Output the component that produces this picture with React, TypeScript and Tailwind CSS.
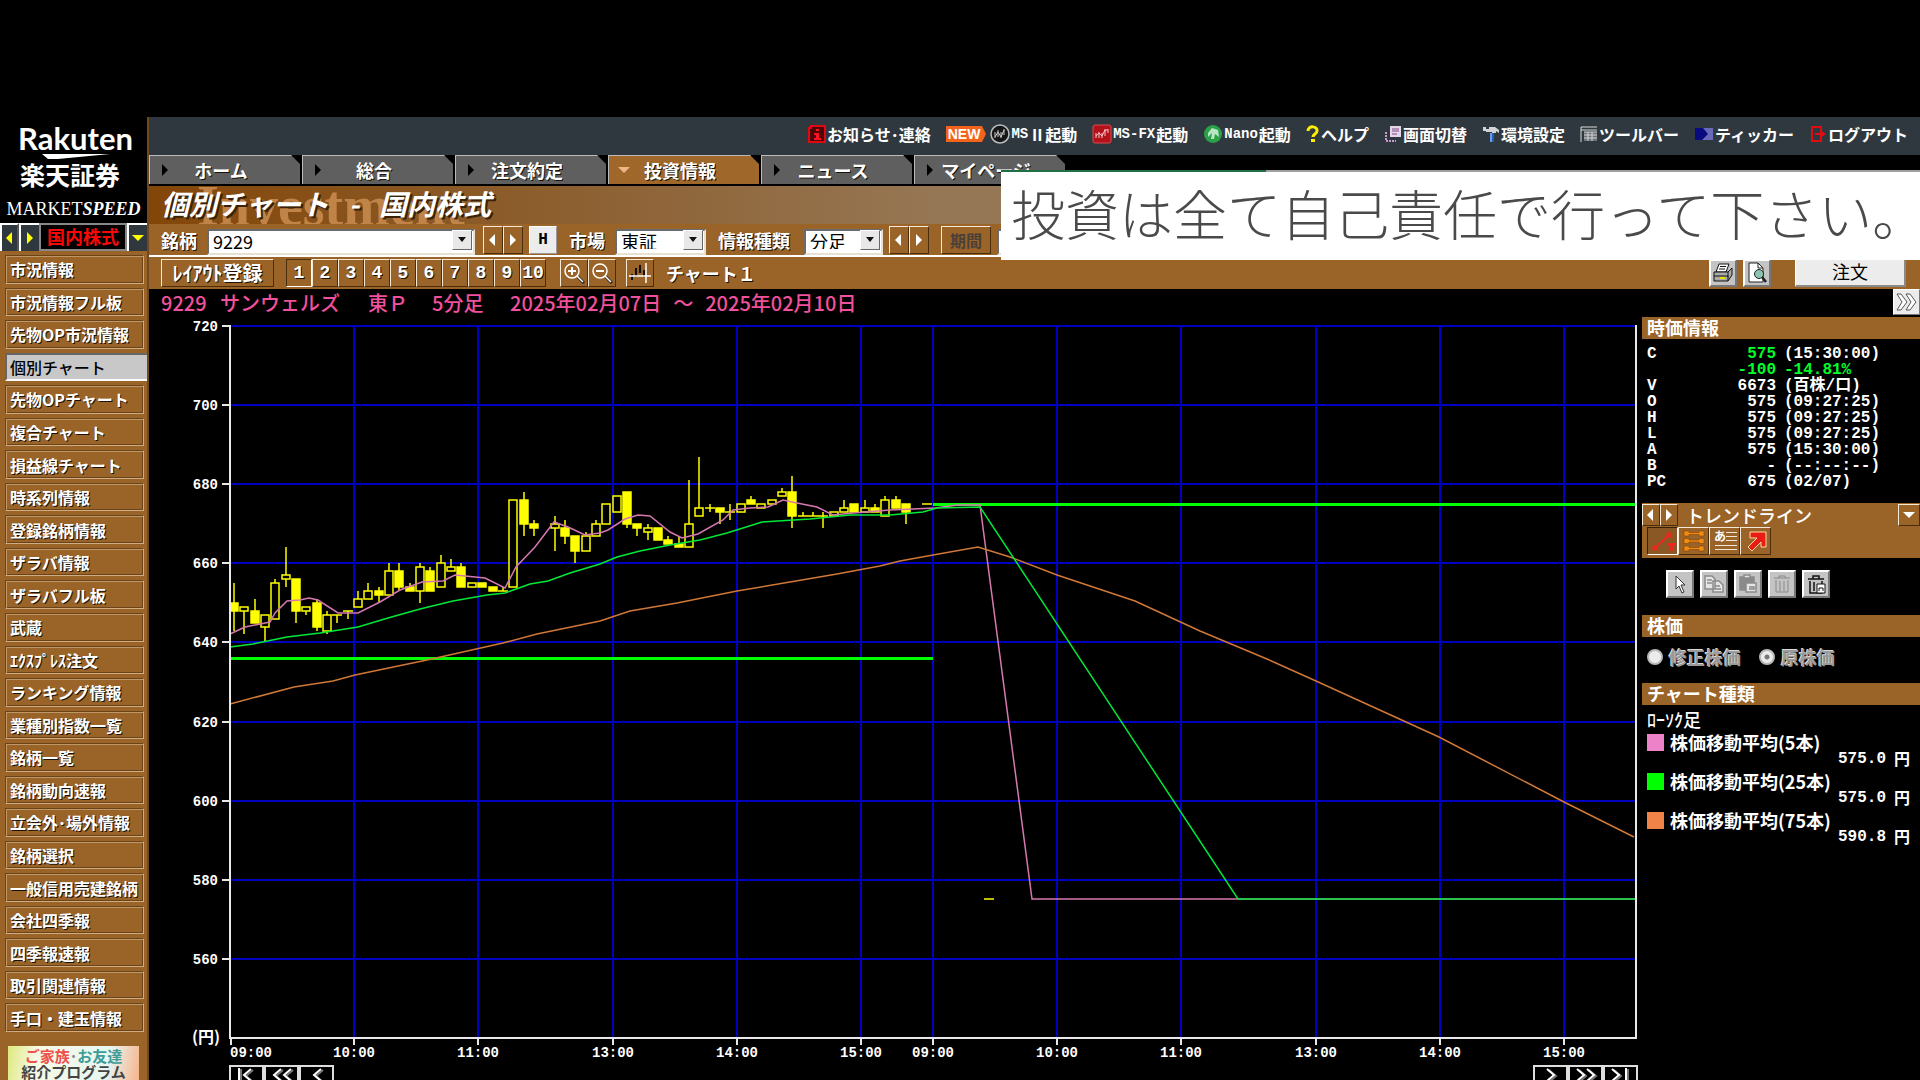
import type { ReactNode } from 'react'

const raised =
  'border border-t-[#f5ead8] border-l-[#f5ead8] border-r-[#4a2d0c] border-b-[#4a2d0c] bg-[#9a6429]'
const grayRaised =
  'border-2 border-t-white border-l-white border-r-[#777] border-b-[#777] bg-[#c4c4c4]'
const shadow = '[text-shadow:1px_1px_0_#1a1208]'

const menuItems = [
  '市況情報',
  '市況情報フル板',
  '先物OP市況情報',
  '個別チャート',
  '先物OPチャート',
  '複合チャート',
  '損益線チャート',
  '時系列情報',
  '登録銘柄情報',
  'ザラバ情報',
  'ザラバフル板',
  '武蔵',
  'ｴｸｽﾌﾟﾚｽ注文',
  'ランキング情報',
  '業種別指数一覧',
  '銘柄一覧',
  '銘柄動向速報',
  '立会外･場外情報',
  '銘柄選択',
  '一般信用売建銘柄',
  '会社四季報',
  '四季報速報',
  '取引関連情報',
  '手口・建玉情報',
]

const tabs = ['ホーム', '総合', '注文約定', '投資情報', 'ニュース', 'マイページ']

const quotes = [
  { label: 'C', value: '575', note: '(15:30:00)', up: true },
  { label: '', value: '-100', note: '-14.81%', up: true, noteUp: true },
  { label: 'V', value: '6673', note: '(百株/口)' },
  { label: 'O', value: '575', note: '(09:27:25)' },
  { label: 'H', value: '575', note: '(09:27:25)' },
  { label: 'L', value: '575', note: '(09:27:25)' },
  { label: 'A', value: '575', note: '(15:30:00)' },
  { label: 'B', value: '-', note: '(--:--:--)' },
  { label: 'PC', value: '675', note: '(02/07)' },
]

const averages = [
  { label: '株価移動平均(5本)', value: '575.0', color: 'bg-[#ee82c8]' },
  { label: '株価移動平均(25本)', value: '575.0', color: 'bg-[#00ff00]' },
  { label: '株価移動平均(75本)', value: '590.8', color: 'bg-[#f08448]' },
]

// slot, high, low, body top, body bottom, filled
const candles: [number, number, number, number, number, boolean][] = [
  [0, 655, 643, 650, 648, true],
  [1, 649, 642, 649, 648, false],
  [2, 651, 645, 648, 645, true],
  [3, 647, 640, 647, 644, false],
  [4, 656, 646, 655, 646, false],
  [5, 664, 654, 657, 656, false],
  [6, 656, 645, 656, 648, true],
  [7, 649, 647, 649, 648, false],
  [8, 651, 643, 650, 644, true],
  [9, 648, 642, 647, 643, false],
  [10, 647, 645, 647, 647, true],
  [11, 648, 646, 648, 648, true],
  [12, 653, 649, 651, 649, false],
  [13, 655, 651, 653, 651, false],
  [14, 654, 650, 653, 652, true],
  [15, 660, 652, 658, 652, false],
  [16, 660, 653, 658, 654, true],
  [17, 655, 653, 654, 653, true],
  [18, 660, 650, 659, 653, false],
  [19, 659, 653, 658, 653, true],
  [20, 662, 654, 660, 654, false],
  [21, 661, 658, 659, 658, false],
  [22, 660, 654, 659, 654, true],
  [23, 655, 654, 655, 654, false],
  [24, 655, 654, 655, 654, true],
  [25, 654, 653, 654, 653, true],
  [26, 654, 653, 653, 653, true],
  [27, 676, 654, 676, 654, false],
  [28, 678, 667, 676, 670, true],
  [29, 671, 667, 670, 669, true],
  [31, 672, 663, 670, 669, false],
  [32, 671, 665, 669, 667, true],
  [33, 667, 660, 667, 663, true],
  [34, 668, 663, 667, 663, false],
  [35, 671, 667, 670, 667, false],
  [36, 675, 670, 675, 670, false],
  [37, 677, 673, 677, 673, false],
  [38, 678, 669, 678, 670, true],
  [39, 670, 667, 670, 669, true],
  [40, 670, 666, 669, 668, false],
  [41, 669, 666, 669, 666, true],
  [42, 667, 665, 666, 665, true],
  [43, 667, 664, 665, 664, true],
  [44, 681, 664, 670, 664, false],
  [45, 687, 672, 674, 672, false],
  [46, 675, 673, 674, 674, true],
  [47, 674, 670, 674, 673, true],
  [48, 675, 671, 673, 673, true],
  [49, 675, 673, 675, 673, false],
  [50, 677, 675, 676, 675, true],
  [51, 675, 674, 675, 674, false],
  [52, 676, 675, 676, 675, false],
  [53, 679, 677, 678, 677, false],
  [54, 682, 669, 678, 672, true],
  [55, 673, 672, 672, 672, true],
  [56, 673, 672, 672, 672, true],
  [57, 673, 669, 672, 672, true],
  [58, 673, 672, 673, 672, false],
  [59, 676, 673, 674, 673, false],
  [60, 675, 673, 675, 673, true],
  [61, 676, 673, 674, 673, false],
  [62, 675, 673, 674, 673, true],
  [63, 677, 672, 676, 672, false],
  [64, 677, 674, 676, 674, true],
  [65, 675, 670, 675, 673, true],
  [67, 675, 675, 675, 675, true],
  [73, 575, 575, 575, 575, true],
]

const prices = [720, 700, 680, 660, 640, 620, 600, 580, 560]
const times = [
  { x: 354, label: '10:00' },
  { x: 478, label: '11:00' },
  { x: 613, label: '13:00' },
  { x: 737, label: '14:00' },
  { x: 861, label: '15:00' },
  { x: 933, label: '09:00' },
  { x: 1057, label: '10:00' },
  { x: 1181, label: '11:00' },
  { x: 1316, label: '13:00' },
  { x: 1440, label: '14:00' },
  { x: 1564, label: '15:00' },
]

const ma5 =
  '230,634 245,627 270,622 275,613 287,601 300,600 309,598 318,600 338,613 358,613 380,602 400,590 422,582 443,581 455,575 485,578 505,588 516,567 535,547 554,522 568,527 585,535 600,533 608,530 625,519 638,515 650,516 670,532 682,538 698,534 723,520 733,510 750,508 768,507 783,500 797,503 817,507 833,515 853,513 890,510 935,508 958,505 980,505 1032,899 1636,899'
const ma25 =
  '230,647 253,644 287,637 320,633 358,627 388,618 420,609 453,601 487,595 505,593 530,584 548,581 570,573 600,564 617,557 640,551 670,545 700,540 727,533 762,522 810,519 850,515 890,515 923,512 937,508 980,507 1238,899 1636,899'
const ma75 =
  '230,704 294,687 333,681 355,675 427,660 503,643 537,634 600,621 630,611 677,603 737,591 790,582 837,574 880,566 900,561 933,555 978,547 1010,557 1057,575 1135,601 1200,631 1267,659 1316,681 1439,737 1564,802 1634,837'

const priceY = (price: number) => Math.round(326 + (720 - price) * 3.955)
const slotX = (slot: number) => Math.round(234 + slot * 10.34)

function Arrow({ dir, className = 'text-white' }: { dir: 'left' | 'right' | 'down'; className?: string }) {
  const points = {
    left: '9,1 3,7 9,13',
    right: '4,1 10,7 4,13',
    down: '1,4 13,4 7,10',
  }
  return (
    <svg viewBox="0 0 14 14" className={`size-3.5 ${className}`} fill="currentColor">
      <polygon points={points[dir]} />
    </svg>
  )
}

function ArrowPair() {
  return (
    <div className="flex">
      <button type="button" aria-label="前へ" className={`flex h-7 w-5 items-center justify-center ${raised}`}>
        <Arrow dir="left" />
      </button>
      <button type="button" aria-label="次へ" className={`flex h-7 w-5 items-center justify-center ${raised}`}>
        <Arrow dir="right" />
      </button>
    </div>
  )
}

function Dropdown({ id, value, width }: { id: string; value: string; width: string }) {
  return (
    <div className={`relative h-[26px] ${width}`}>
      <select
        id={id}
        defaultValue={value}
        className="size-full appearance-none border-2 border-t-[#6b6b6b] border-l-[#6b6b6b] border-r-[#e8e0d0] border-b-[#e8e0d0] bg-white pb-1 pl-1 text-lg leading-5 font-normal text-black"
      >
        <option>{value}</option>
      </select>
      <span className="pointer-events-none absolute inset-y-[3px] right-[3px] flex w-5 items-center justify-center border border-t-white border-l-white border-r-[#666] border-b-[#666] bg-[#e8e8e8]">
        <svg viewBox="0 0 8 5" className="h-[5px] w-2">
          <path d="M0 0h8L4 5z" fill="#111" />
        </svg>
      </span>
    </div>
  )
}

function Latin({ children }: { children: string }) {
  return <span className="font-['Liberation_Mono',monospace] text-sm leading-none">{children}</span>
}

function UtilityLink({ icon, children }: { icon: ReactNode; children: ReactNode }) {
  return (
    <a href="#" className="flex items-center gap-px whitespace-nowrap">
      {icon}
      {children}
    </a>
  )
}

function UtilityBar() {
  return (
    <nav className="flex h-[38px] items-center justify-end gap-[15px] bg-[#2f383f] pr-3 pb-1 text-base leading-none font-bold text-white">
      <UtilityLink
        icon={
          <svg viewBox="0 0 18 18" className="size-[18px]">
            <path d="M1 3h2V1h14v16H1z" fill="#4d0508" stroke="#e00812" strokeWidth="2" />
            <path d="M8 4h3v2H8zM6 8h5v5h2v2H6v-2h2v-3H6z" fill="#ff1420" />
          </svg>
        }
      >
        お知らせ･連絡
      </UtilityLink>
      <div className="flex items-center gap-1">
        <span className="flex items-center">
          <span className="bg-[#f4631c] px-0.5 py-px font-['Liberation_Sans',sans-serif] text-sm leading-3.5">NEW</span>
          <svg viewBox="0 0 4 16" className="h-4 w-1">
            <path d="M0 0l4 8-4 8z" fill="#f4631c" />
          </svg>
        </span>
        <UtilityLink
          icon={
            <svg viewBox="0 0 20 20" className="size-5">
              <circle cx="10" cy="10" r="9" fill="#171717" stroke="#bdbdbd" strokeWidth="1.5" />
              <path d="M5 8v6M8 6v7M11 8v6M14 5v6M5 13l3-5 3 5 3-7" stroke="#ccc" fill="none" />
            </svg>
          }
        >
          <Latin>MS</Latin>Ⅱ起動
        </UtilityLink>
      </div>
      <UtilityLink
        icon={
          <svg viewBox="0 0 20 20" className="size-5">
            <rect x="1" y="1" width="18" height="18" rx="2" fill="#b3121a" stroke="#e04a4a" />
            <path d="M4 9v5M7 8v6M10 9v5M13 5v7M16 5v4M4 12l3-3 3 3 3-6h3" stroke="#f4c8c8" fill="none" />
          </svg>
        }
      >
        <Latin>MS-FX</Latin>起動
      </UtilityLink>
      <UtilityLink
        icon={
          <svg viewBox="0 0 20 20" className="size-5">
            <circle cx="10" cy="10" r="9" fill="#2aa148" />
            <path d="M5 13V9l4-5 6 2 1 7-4-3-1 5H8l1-6z" fill="#b9e6c2" />
          </svg>
        }
      >
        <Latin>Nano</Latin>起動
      </UtilityLink>
      <UtilityLink
        icon={
          <svg viewBox="0 0 14 18" className="h-[18px] w-3.5">
            <path d="M2 6c0-6 10-5 9 0 0 3-4 3-4 6" stroke="#ffee00" strokeWidth="3" fill="none" />
            <rect x="5" y="14" width="4" height="3" fill="#ffee00" />
          </svg>
        }
      >
        ヘルプ
      </UtilityLink>
      <UtilityLink
        icon={
          <svg viewBox="0 0 18 18" className="size-[18px]">
            <rect x="6" y="1" width="11" height="11" fill="#e7d5ea" />
            <path d="M8 4h7M8 6h7M8 9h5" stroke="#7a4a86" />
            <path d="M2 7v9h10" stroke="#c99ad0" strokeWidth="2" strokeDasharray="2 1" fill="none" />
          </svg>
        }
      >
        画面切替
      </UtilityLink>
      <UtilityLink
        icon={
          <svg viewBox="0 0 18 18" className="size-[18px]">
            <path d="M1 2h3v2h3V2h6l4 3v3l-3-2v2h-4V7H4V6H1z" fill="#d0d4d6" />
            <rect x="8" y="8" width="4" height="9" fill="#1f5fc4" />
            <path d="M9 8v9" stroke="#bcd8ff" />
          </svg>
        }
      >
        環境設定
      </UtilityLink>
      <UtilityLink
        icon={
          <svg viewBox="0 0 18 18" className="size-[18px]">
            <path d="M1 17V2h16M1 5h16" stroke="#d9d9d9" fill="none" />
            <rect x="4" y="7" width="13" height="9" fill="#6d747a" />
            <path d="M4 7h13M4 10h13M4 13h13M8 7v9M12 7v9" stroke="#d4d4d4" fill="none" />
          </svg>
        }
      >
        ツールバー
      </UtilityLink>
      <UtilityLink
        icon={
          <svg viewBox="0 0 20 18" className="h-[18px] w-5">
            <rect x="1" y="3" width="18" height="12" fill="#0a0a80" />
            <path d="M9 3h10v12H8l6-6z" fill="#6a6ab8" />
          </svg>
        }
      >
        ティッカー
      </UtilityLink>
      <UtilityLink
        icon={
          <svg viewBox="0 0 18 18" className="size-[18px]">
            <path d="M12 6V2H3v14h9v-4" stroke="#e00c10" strokeWidth="2" fill="none" />
            <path d="M6 8h5V5l6 4-6 4v-3H6z" fill="#e00c10" />
          </svg>
        }
      >
        ログアウト
      </UtilityLink>
    </nav>
  )
}

function TabBar() {
  return (
    <div role="tablist" className="flex h-[31px] items-start gap-0.5 bg-black">
      {tabs.map((tab) => {
        const active = tab === '投資情報'
        return (
          <button
            key={tab}
            type="button"
            role="tab"
            aria-selected={active}
            className={`flex h-[29px] w-[151px] items-center border-t border-l border-[#bbb] [clip-path:polygon(0_0,142px_0,100%_9px,100%_100%,0_100%)] ${active ? 'bg-[#a0672b]' : 'bg-[#5f5f5f]'}`}
          >
            <span className="w-6 pl-2">
              <Arrow dir={active ? 'down' : 'right'} className={active ? 'text-[#efb687]' : 'text-black'} />
            </span>
            <span className={`flex-1 pr-8 text-center text-lg leading-none font-bold text-white ${shadow}`}>{tab}</span>
          </button>
        )
      })}
    </div>
  )
}

function Controls() {
  return (
    <div className="flex h-[33px] items-center border-b-2 border-white bg-[#9a6429] pl-3 text-lg font-bold text-white">
      <label htmlFor="symbol" className={shadow}>
        銘柄
      </label>
      <div className="ml-2.5">
        <Dropdown id="symbol" value="9229" width="w-[268px]" />
      </div>
      <div className="ml-2">
        <ArrowPair />
      </div>
      <button
        type="button"
        className="ml-1.5 h-7 w-7 border border-t-white border-l-white border-r-[#999] border-b-[#999] bg-[#ececec] font-['Liberation_Mono',monospace] text-base font-bold text-black"
      >
        H
      </button>
      <label htmlFor="market" className={`ml-3 ${shadow}`}>
        市場
      </label>
      <div className="ml-2.5">
        <Dropdown id="market" value="東証" width="w-[91px]" />
      </div>
      <label htmlFor="kind" className={`ml-3 ${shadow}`}>
        情報種類
      </label>
      <div className="ml-3.5">
        <Dropdown id="kind" value="分足" width="w-[79px]" />
      </div>
      <div className="ml-1.5">
        <ArrowPair />
      </div>
      <button type="button" disabled className={`ml-3 h-7 w-[50px] text-base leading-none text-[#4a4038] ${raised}`}>
        期間
      </button>
      <div className="ml-1.5">
        <Dropdown id="term" value="5" width="w-16" />
      </div>
    </div>
  )
}

function Toolbar() {
  return (
    <div className="flex h-8 items-center bg-[#9a6429] pl-3 text-lg leading-none font-bold text-white">
      <button type="button" className={`h-7 w-[113px] text-xl leading-none ${shadow} ${raised}`}>
        ﾚｲｱｳﾄ登録
      </button>
      <div className="ml-3 flex font-['Liberation_Mono',monospace]">
        {[1, 2, 3, 4, 5, 6, 7, 8, 9, 10].map((n) => (
          <button
            key={n}
            type="button"
            className={`h-7 w-[26px] ${shadow} ${n === 1 ? 'border border-t-[#4a2d0c] border-l-[#4a2d0c] border-r-white border-b-white' : raised}`}
          >
            {n}
          </button>
        ))}
      </div>
      <div className="ml-3.5 flex">
        {[true, false].map((plus) => (
          <button
            key={String(plus)}
            type="button"
            aria-label={plus ? '拡大' : '縮小'}
            className={`flex h-7 w-7 items-center justify-center ${raised}`}
          >
            <svg viewBox="0 0 22 22" className="size-[22px]" fill="none" stroke="#fff">
              <path d="M15 15l6 6" stroke="#222" strokeWidth="3" />
              <path d="M14 14l6 6" strokeWidth="1.5" />
              <circle cx="9" cy="9" r="7" strokeWidth="1.500" />
              <path d={plus ? 'M5 9h8M9 5v8' : 'M5 9h8'} strokeWidth="2" />
            </svg>
          </button>
        ))}
      </div>
      <button type="button" aria-label="十字線" className={`ml-2.5 flex h-7 w-7 items-center justify-center ${raised}`}>
        <svg viewBox="0 0 22 22" className="size-[22px]">
          <path d="M3 12v6M7 6v9M11 3v8M15 8v7" stroke="#111" strokeWidth="2" />
          <path d="M0 14h22M17 1v20" stroke="#fff" strokeWidth="1.5" />
        </svg>
      </button>
      <span className={`ml-3 ${shadow}`}>チャート１</span>
      <div className="ml-auto flex items-center gap-1.5 pr-3.5">
        <button type="button" aria-label="印刷" className={`flex h-7 w-7 items-center justify-center ${grayRaised}`}>
          <svg viewBox="0 0 22 22" className="size-[22px]" stroke="#111">
            <path d="M7 2h10l-3 8H4z" fill="#fff" />
            <path d="M2 10h14l4-4v7l-4 6H2z" fill="#aaa" />
            <path d="M2 14h14v5M16 10v5M8 4.500h6M7 7h6" fill="none" />
            <path d="M8 16h5" stroke="#e8e000" strokeWidth="2" />
          </svg>
        </button>
        <button type="button" aria-label="印刷プレビュー" className={`flex h-7 w-7 items-center justify-center ${grayRaised}`}>
          <svg viewBox="0 0 22 22" className="size-[22px]" stroke="#222">
            <path d="M3 1h9l5 5v14H3z" fill="#fff" />
            <path d="M12 1v5h5" fill="none" />
            <path d="M16 15l4 5" strokeWidth="2.500" />
            <circle cx="13" cy="12" r="4.500" fill="#8cc5b4" />
          </svg>
        </button>
        <button
          type="button"
          className="ml-[18px] h-7 w-[111px] border border-t-white border-l-white border-r-2 border-b-2 border-r-[#8a8a8a] border-b-[#8a8a8a] bg-[#ececec] pb-1 text-lg leading-none font-normal text-black"
        >
          注文
        </button>
      </div>
    </div>
  )
}

function PriceChart() {
  return (
    <svg viewBox="149 317 1493 745" className="block w-full" role="img" aria-label="9229 5分足チャート">
      <g stroke="#0000c0" strokeWidth="2">
        {prices.map((p) => (
          <line key={p} x1="231" x2="1635" y1={priceY(p)} y2={priceY(p)} />
        ))}
        {times.map((t) => (
          <line key={t.x} x1={t.x} x2={t.x} y1="326" y2="1037" />
        ))}
      </g>

      <g stroke="#00ff00" strokeWidth="3">
        <line x1="231" x2="933" y1="658.500" y2="658.500" />
        <line x1="933" x2="1635" y1="504.500" y2="504.500" />
      </g>

      <g stroke="#ffff00" strokeWidth="1.500">
        {candles.map(([slot, high, low, top, bottom, filled]) => {
          const x = slotX(slot)
          const y = priceY(top)
          const height = priceY(bottom) - y
          return (
            <g key={slot}>
              {high > top && <line x1={x} x2={x} y1={priceY(high)} y2={y} />}
              {low < bottom && <line x1={x} x2={x} y1={priceY(bottom)} y2={priceY(low)} />}
              {height === 0 ? (
                <line x1={x - 5} x2={x + 5} y1={y} y2={y} />
              ) : (
                <rect x={x - 4} y={y} width="8" height={height} fill={filled ? '#ffff00' : '#000'} />
              )}
            </g>
          )
        })}
      </g>

      <g fill="none" strokeWidth="1.500">
        <polyline points={ma5} stroke="#d678b0" />
        <polyline points={ma75} stroke="#d07838" />
        <polyline points={ma25} stroke="#00e838" />
      </g>

      <g stroke="#e8e8e8" strokeWidth="2" fill="none">
        <path d="M230 325V1038H1636V325" />
        {prices.map((p) => (
          <line key={p} x1="222" x2="230" y1={priceY(p)} y2={priceY(p)} />
        ))}
        <line x1="231" x2="231" y1="1038" y2="1045" />
        {times.map((t) => (
          <line key={t.x} x1={t.x} x2={t.x} y1="1038" y2="1045" />
        ))}
      </g>

      <g className="fill-white font-['Liberation_Mono',monospace] text-sm font-bold">
        {prices.map((p) => (
          <text key={p} x="218" y={priceY(p) + 5} textAnchor="end">
            {p}
          </text>
        ))}
        <text x="230" y="1057">
          09:00
        </text>
        {times.map((t) => (
          <text key={t.x} x={t.x} y="1057" textAnchor="middle">
            {t.label}
          </text>
        ))}
      </g>
      <text x="220" y="1043" textAnchor="end" className="fill-white text-base font-bold">
        (円)
      </text>
    </svg>
  )
}

function ScrollButton({ label, d }: { label: string; d: string }) {
  return (
    <button type="button" aria-label={label} className="flex h-6 w-[35px] items-center justify-center border-2 border-[#dedede] bg-black">
      <svg viewBox="0 0 30 20" className="h-5 w-[30px]" fill="none" strokeWidth="2">
        <path d={d} stroke="#777" transform="translate(2 1)" />
        <path d={d} stroke="#fff" />
      </svg>
    </button>
  )
}

function ChartPane() {
  return (
    <section className="min-w-0 flex-1">
      <h2 className="flex h-7 items-center pl-3 text-xl leading-none font-medium whitespace-nowrap text-[#f0509c]">
        <span className="w-[59px]">9229</span>
        <span className="w-[148px]">サンウェルズ</span>
        <span className="w-16">東Ｐ</span>
        <span className="w-[78px]">5分足</span>
        <span className="flex gap-3">
          <span>2025年02月07日</span>
          <span>～</span>
          <span>2025年02月10日</span>
        </span>
      </h2>
      <PriceChart />
      <div className="flex justify-between pt-[3px] pr-1 pl-20">
        <div className="flex">
          <ScrollButton label="最初" d="M7 1v18M19 2l-7 6 7 6" />
          <ScrollButton label="早戻し" d="M14 2l-7 6 7 6M24 2l-7 6 7 6" />
          <ScrollButton label="戻る" d="M19 2l-7 6 7 6" />
        </div>
        <div className="flex">
          <ScrollButton label="進む" d="M11 2l7 6-7 6" />
          <ScrollButton label="早送り" d="M6 2l7 6-7 6M16 2l7 6-7 6" />
          <ScrollButton label="最後" d="M6 2l7 6-7 6M20 1v18" />
        </div>
      </div>
    </section>
  )
}

function PanelHeading({ children }: { children: ReactNode }) {
  return <h3 className="flex h-[22px] items-center bg-[#9a6429] pb-0.5 pl-[5px] text-lg leading-none font-bold text-white">{children}</h3>
}

function EditButton({ label, children }: { label: string; children: ReactNode }) {
  return (
    <button type="button" aria-label={label} className={`flex size-7 items-center justify-center ${grayRaised}`}>
      <svg viewBox="0 0 22 22" className="size-[22px]" fill="none" stroke="#8a8a8a" strokeWidth="1.500">
        {children}
      </svg>
    </button>
  )
}

function SidePanel() {
  return (
    <aside className="w-[278px] text-white">
      <div className="flex h-7 items-start justify-end">
        <button type="button" aria-label="パネルを閉じる" className="flex h-[26px] w-[27px] items-center justify-center border border-white border-r-[#777] border-b-[#777] bg-[#ececec]">
          <svg viewBox="0 0 24 22" className="h-[22px] w-6" fill="#fff" stroke="#555">
            <path d="M2 3h4l6 8-6 8H2l5-8zM11 3h4l6 8-6 8h-4l5-8z" />
          </svg>
        </button>
      </div>
      <PanelHeading>時価情報</PanelHeading>
      <table className="mt-[7px] w-60 font-['Liberation_Mono','Noto_Sans_CJK_JP',monospace] text-base leading-4 font-bold">
        <tbody>
          {quotes.map((q) => (
            <tr key={q.note + q.label} className="h-4">
              <th scope="row" className="w-10 p-0 pl-[5px] text-left leading-4">
                {q.label}
              </th>
              <td className={`w-[94px] p-0 text-right leading-4 ${q.up ? 'text-[#00ff2a]' : ''}`}>{q.value}</td>
              <td className={`p-0 pl-2 leading-4 whitespace-nowrap ${q.noteUp ? 'text-[#00ff2a]' : ''}`}>{q.note}</td>
            </tr>
          ))}
        </tbody>
      </table>

      <div className="mt-[13px] h-[55px] bg-[#9a6429]">
        <div className="flex h-6 items-center">
          <button type="button" aria-label="前へ" className={`flex h-[22px] w-[18px] items-center justify-center ${raised}`}>
            <Arrow dir="left" />
          </button>
          <button type="button" aria-label="次へ" className={`flex h-[22px] w-[18px] items-center justify-center ${raised}`}>
            <Arrow dir="right" />
          </button>
          <span className="ml-2 text-lg leading-none font-medium">トレンドライン</span>
          <button type="button" aria-label="一覧" className={`ml-auto flex h-[22px] w-[22px] items-center justify-center ${raised}`}>
            <Arrow dir="down" />
          </button>
        </div>
        <div className="flex pl-[5px]">
          <button type="button" aria-label="トレンドライン" className="flex h-7 w-[31px] items-center justify-center border border-t-[#3a2208] border-l-[#3a2208] border-r-white border-b-white bg-[#8a5824]">
            <svg viewBox="0 0 26 24" className="h-6 w-[26px]" fill="#e8281c" stroke="#e8281c">
              <path d="M5 19L19 6" strokeWidth="2" />
              <rect x="3" y="17" width="4" height="4" />
              <rect x="17" y="4" width="4" height="4" />
              <path d="M18 15.500h7M21.500 15v7" strokeWidth="3" />
            </svg>
          </button>
          <button type="button" aria-label="線の種類" className={`flex h-7 w-[31px] items-center justify-center ${raised}`}>
            <svg viewBox="0 0 26 24" className="h-6 w-[26px]" fill="#f08c10" stroke="#7a3a00" strokeWidth=".5">
              <path d="M3 2h5v1.500h10V2h5v5h-5V5.500H8V7H3zM3 9.500h5V11h10V9.500h5v5h-5V13H8v1.500H3zM3 17h5v1.500h10V17h5v5h-5v-1.500H8V22H3z" />
            </svg>
          </button>
          <button type="button" aria-label="文字" className={`relative flex h-7 w-[31px] items-center justify-center ${raised}`}>
            <svg viewBox="0 0 26 24" className="h-6 w-[26px]" stroke="#f0e6da">
              <path d="M14 3.500h11M14 7.500h11M14 11.500h11M3 16.500h22M3 20.500h22" />
            </svg>
            <span className="absolute top-0.5 left-1 text-xs leading-3 font-bold">あ</span>
          </button>
          <button type="button" aria-label="矢印" className={`flex h-7 w-[31px] items-center justify-center ${raised}`}>
            <svg viewBox="0 0 26 24" className="h-6 w-[26px]">
              <path d="M7 3h16v15h-5v-5l-9 9-4-4 9-9H7z" fill="#e81c14" stroke="#ffd8a0" />
            </svg>
          </button>
        </div>
      </div>

      <div className="mt-3 flex gap-1.5 pl-6">
        <EditButton label="選択">
          <path d="M7 3l9 9h-4l3 7-2 1-3-7-3 3z" fill="#fff" stroke="#333" strokeWidth="1" />
        </EditButton>
        <EditButton label="コピー">
          <path d="M2 3h7l3 3v10H2zM10 8h6l4 4v7H10zM4 7h5M4 10h5M12 13h5M12 16h6" fill="#e4e4e4" />
        </EditButton>
        <EditButton label="貼り付け">
          <path d="M3 4h14v13H3z" fill="#8a8a8a" />
          <path d="M7 2h6v3H7zM9 10h10v9H9zM12 14h5v2h-5" fill="#e4e4e4" />
        </EditButton>
        <EditButton label="削除">
          <path d="M3 5h16M8 5V3h6v2M5 7v12h12V7M9 8v10M13 8v10" strokeWidth="1" />
        </EditButton>
        <EditButton label="全削除">
          <path d="M3 6h16M8 6V3h6v3M5 8v12h12V8M9 9v9" stroke="#111" strokeWidth="1.500" />
          <path d="M12 11h8v9h-8zM14 18v-3h4v3" fill="#fff" stroke="#111" strokeWidth="1" />
        </EditButton>
      </div>

      <div className="mt-[17px]">
        <PanelHeading>株価</PanelHeading>
      </div>
      <div className="flex h-[46px] items-center gap-[18px] pb-1.5 pl-[5px] text-lg leading-none font-bold text-[#9a9a9a]">
        {['修正株価', '原株価'].map((name) => (
          <label key={name} className="flex items-center gap-1.5 [text-shadow:-1px_-1px_0_#d8d8d8]">
            <input
              type="radio"
              name="price-type"
              defaultChecked={name === '原株価'}
              className="size-4 appearance-none rounded-full border-2 border-[#b8b8b8] bg-[#ececec] checked:bg-[radial-gradient(circle,#777_2px,#ececec_3px)]"
            />
            {name}
          </label>
        ))}
      </div>

      <PanelHeading>チャート種類</PanelHeading>
      <p className="mt-1.5 pl-[5px] text-lg leading-4 font-medium">ﾛｰｿｸ足</p>
      <ul className="mt-[7px] text-lg leading-none font-bold">
        {averages.map((a) => (
          <li key={a.label} className="h-[39px]">
            <div className="flex h-[17px] items-center gap-1.5 pl-[5px] whitespace-nowrap">
              <span className={`size-[17px] ${a.color}`} />
              <span className="pb-0.5">{a.label}</span>
            </div>
            <p className="flex h-4 items-center justify-end gap-2 pr-2.5 text-base leading-none">
              <span className="font-['Liberation_Mono',monospace]">{a.value}</span>
              <span className="pb-0.5">円</span>
            </p>
          </li>
        ))}
      </ul>
    </aside>
  )
}

function Sidebar() {
  return (
    <aside className="flex w-[149px] shrink-0 flex-col border-r-2 border-[#6f4a20] bg-[#9a6429]">
      <div className="h-[106px] bg-black text-white">
        <div className="pt-1.5 pl-[18px] font-['Lato',sans-serif] text-[31px] leading-[30px] font-bold">Rakuten</div>
        <svg viewBox="0 0 147 8" className="block h-2 w-full">
          <path d="M42 1H110L58 6H48z" fill="#fff" />
        </svg>
        <div className="pl-5 text-[25px] leading-[26px] font-bold">楽天証券</div>
        <div className="pt-2.5 text-center font-['Liberation_Serif',serif] text-lg leading-6">
          MARKET<em className="font-bold">SPEED</em>
        </div>
      </div>
      <div className="flex h-7 bg-[#2f383f]">
        <button type="button" aria-label="前の市場" className="flex w-[19px] items-center justify-center border-2 border-b-0 border-white border-r-[#555]">
          <Arrow dir="left" className="text-[#ffff00]" />
        </button>
        <button type="button" aria-label="次の市場" className="flex w-5 items-center justify-center border-t-2 border-l-2 border-white">
          <Arrow dir="right" className="text-[#ffff00]" />
        </button>
        <span className="flex flex-1 items-center justify-center border-2 border-[#888] bg-black pb-0.5 text-lg leading-none font-bold text-[#f80808]">
          国内株式
        </span>
        <button type="button" aria-label="市場を選ぶ" className="flex w-5 items-center justify-center border-t-2 border-l-2 border-white">
          <Arrow dir="down" className="text-[#ffff00]" />
        </button>
      </div>
      <nav className="mt-1 grid flex-1 auto-rows-fr pl-[5px]">
        {menuItems.map((item) => (
          <div key={item} className="pb-1">
            {item === '個別チャート' ? (
              <a
                href="#"
                className="flex h-full items-center border-t-2 border-b-2 border-l-2 border-t-[#666] border-b-white border-l-[#666] bg-[#c8c8c8] pl-[3px] text-base leading-none font-medium whitespace-nowrap text-black"
              >
                {item}
              </a>
            ) : (
              <a
                href="#"
                className={`mr-[3px] flex h-full items-center border border-t-[#6a4418] border-r-[#d0ac80] border-b-[#d0ac80] border-l-[#6a4418] pl-1 text-base leading-none font-bold whitespace-nowrap text-white [box-shadow:inset_1px_1px_0_#c09868,inset_-1px_-1px_0_#6a4418] ${shadow}`}
              >
                {item}
              </a>
            )}
          </div>
        ))}
      </nav>
      <a
        href="#"
        className="mx-2 mt-2.5 block h-[34px] bg-[linear-gradient(100deg,#dfe87c,#f6fae6_22%,#e6f6f2_75%,#f8b48c)] pt-0.5 text-center text-[15px] leading-4 font-bold whitespace-nowrap"
      >
        <span className="text-[#f0504c]">ご家族</span>
        <span className="text-[#888]">･</span>
        <span className="text-[#3c9c98]">お友達</span>
        <span className="block text-[#444]">紹介プログラム</span>
      </a>
    </aside>
  )
}

export default function App() {
  return (
    <div className="flex h-screen overflow-hidden bg-black pt-[117px] font-['Noto_Sans_CJK_JP',sans-serif]">
      <Sidebar />
      <main className="flex min-w-0 flex-1 flex-col">
        <header className="relative">
          <UtilityBar />
          <TabBar />
          <div className="relative flex h-[38px] items-center overflow-hidden bg-[linear-gradient(90deg,#834608,#967755_45%,#967755)] pb-1 pl-3">
            <span aria-hidden className="absolute -top-1 left-12 font-['Liberation_Serif',serif] text-[56px] leading-[48px] font-bold text-[#c08348]">
              Investment
            </span>
            <h1 className="relative flex gap-5 text-[28px] leading-[34px] font-bold text-white italic [text-shadow:2px_2px_0_#3a2208]">
              <span>個別チャート</span>
              <span>-</span>
              <span>国内株式</span>
            </h1>
          </div>
          <Controls />
          <Toolbar />
          <div className="absolute top-[53px] right-0 flex h-[90px] w-[919px] items-center border-t-2 border-[#a0a0a0] bg-white pb-1.5 pl-2.5 text-[54px] leading-none font-light whitespace-nowrap text-[#4a4a4a]">
            投資は全て自己責任で行って下さい。
          </div>
          <div className="absolute top-[53px] right-[654px] h-0.5 w-[265px] bg-[#1f7046]" />
        </header>
        <div className="flex min-h-0 flex-1">
          <ChartPane />
          <SidePanel />
        </div>
      </main>
    </div>
  )
}
